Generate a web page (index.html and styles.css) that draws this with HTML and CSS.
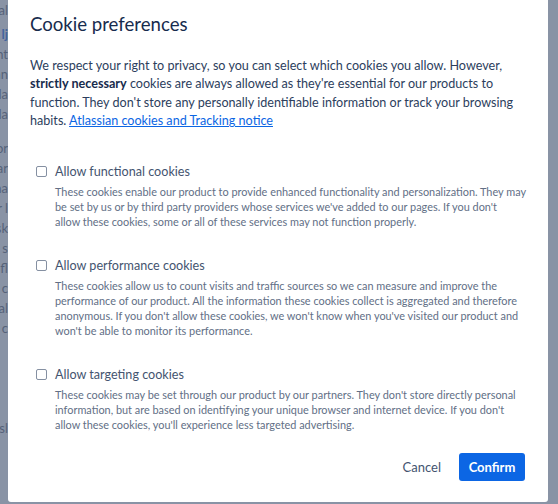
FILE: index.html
```html
<!DOCTYPE html>
<html lang="en">
<head>
<meta charset="utf-8">
<title>Cookie preferences</title>
<link rel="stylesheet" href="styles.css">
</head>
<body>
<div class="screen">
  <div class="behind">
    <span class="frag">al</span>
    <span class="frag link">lj</span>
    <span class="frag">nt</span>
    <span class="frag">an</span>
    <span class="frag">la</span>
    <span class="frag">la</span>
    <span class="frag gap">or</span>
    <span class="frag">ar</span>
    <span class="frag">na</span>
    <span class="frag">r l</span>
    <span class="frag">sk</span>
    <span class="frag">s</span>
    <span class="frag">fl</span>
    <span class="frag">a c</span>
    <span class="frag">al</span>
    <span class="frag">a c</span>
    <span class="frag far">sl</span>
  </div>
  <div class="modal" role="dialog" aria-labelledby="cp-title">
    <h1 class="title" id="cp-title">Cookie preferences</h1>
    <p class="intro">We respect your right to privacy, so you can select which cookies you allow. However,<br><strong>strictly necessary</strong> cookies are always allowed as they're essential for our products to<br>function. They don't store any personally identifiable information or track your browsing<br>habits. <a class="link-notice" href="#">Atlassian cookies and Tracking notice</a></p>
    <div class="options">
      <label class="option">
        <input class="check" type="checkbox">
        <span class="option-body">
          <span class="option-label">Allow functional cookies</span>
          <span class="option-desc">These cookies enable our product to provide enhanced functionality and personalization. They may<br>be set by us or by third party providers whose services we've added to our pages. If you don't<br>allow these cookies, some or all of these services may not function properly.</span>
        </span>
      </label>
      <label class="option">
        <input class="check" type="checkbox">
        <span class="option-body">
          <span class="option-label">Allow performance cookies</span>
          <span class="option-desc">These cookies allow us to count visits and traffic sources so we can measure and improve the<br>performance of our product. All the information these cookies collect is aggregated and therefore<br>anonymous. If you don't allow these cookies, we won't know when you've visited our product and<br>won't be able to monitor its performance.</span>
        </span>
      </label>
      <label class="option">
        <input class="check" type="checkbox">
        <span class="option-body">
          <span class="option-label">Allow targeting cookies</span>
          <span class="option-desc">These cookies may be set through our product by our partners. They don't store directly personal<br>information, but are based on identifying your unique browser and internet device. If you don't<br>allow these cookies, you'll experience less targeted advertising.</span>
        </span>
      </label>
    </div>
    <div class="footer">
      <button class="btn btn-subtle" type="button">Cancel</button>
      <button class="btn btn-primary" type="button">Confirm</button>
    </div>
  </div>
</div>
</body>
</html>
```
FILE: styles.css
```css
html, body {
  margin: 0;
  padding: 0;
}

body {
  background: #8993a5;
  font-family: "Lato", "Noto Sans", "DejaVu Sans", sans-serif;
  overflow: hidden;
}

.screen {
  display: flex;
  width: 558px;
  height: 504px;
  overflow: hidden;
  background: #8993a5;
}

.behind {
  width: 8px;
  flex: none;
  display: flex;
  flex-direction: column;
  align-items: flex-end;
  overflow: hidden;
  font-size: 13px;
  line-height: 20px;
  color: #2c3a55;
}

.frag {
  display: block;
  white-space: nowrap;
  margin-left: -40px;
  width: 48px;
  text-align: right;
  opacity: 0.55;
}

.frag.link {
  color: #0a3f99;
  font-weight: 700;
  margin-top: 4px;
}

.frag.gap {
  margin-top: 14px;
}

.frag.far {
  margin-top: 80px;
}

.modal {
  width: 540px;
  height: 502px;
  flex: none;
  box-sizing: border-box;
  background: #ffffff;
  border-radius: 0 0 3px 3px;
  padding: 12px 23px 21px 22px;
  display: flex;
  flex-direction: column;
}

.title {
  margin: 0;
  font-size: 18.6px;
  line-height: 24px;
  font-weight: 400;
  color: #172b4d;
}

.intro {
  margin: 21px 0 0;
  font-size: 12.6px;
  line-height: 18.4px;
  color: #2c3e5d;
  white-space: nowrap;
}

.intro strong {
  font-weight: 700;
  color: #172b4d;
}

.link-notice {
  color: #0c66e4;
  text-decoration: underline;
}

.options {
  display: flex;
  flex-direction: column;
  gap: 27px;
  margin-top: 31px;
  padding-left: 6px;
}

.option {
  display: flex;
  align-items: flex-start;
  gap: 8px;
  cursor: pointer;
}

.check {
  appearance: none;
  -webkit-appearance: none;
  margin: 4px 0 0;
  width: 11px;
  height: 11px;
  flex: none;
  box-sizing: border-box;
  border: 1.5px solid #8590a2;
  border-radius: 2px;
  background: #ffffff;
}

.option-body {
  display: flex;
  flex-direction: column;
  gap: 2px;
}

.option-label {
  font-size: 12.6px;
  line-height: 20px;
  color: #44546f;
}

.option-desc {
  font-size: 10.9px;
  line-height: 15px;
  color: #626f86;
  white-space: nowrap;
}

.footer {
  margin-top: auto;
  display: flex;
  justify-content: flex-end;
  align-items: center;
  gap: 6px;
}

.btn {
  font-family: inherit;
  font-size: 13px;
  height: 28px;
  border: none;
  border-radius: 3px;
  padding: 0 12px;
  cursor: pointer;
}

.btn-subtle {
  background: transparent;
  color: #44546f;
}

.btn-primary {
  background: #0c66e4;
  color: #ffffff;
  font-weight: 700;
  width: 66px;
  padding: 0;
}
```
